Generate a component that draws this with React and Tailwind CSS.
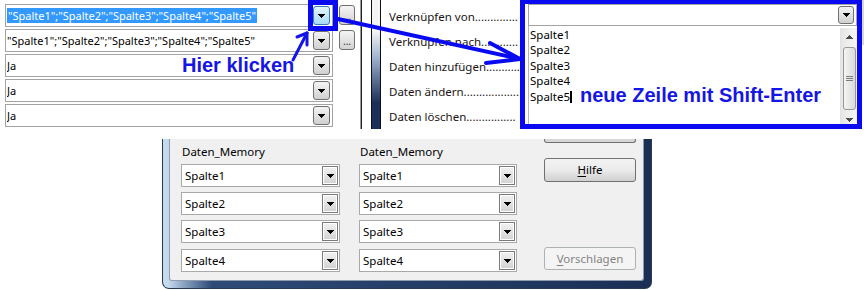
import React from "react";

const UI = "font-['Noto_Sans',sans-serif]";
const ANN = "font-['Liberation_Sans',Arial,sans-serif] font-bold text-[20px] leading-[20px] text-[#1616e4]";

function Tri({ up = false, color = "#000" }) {
  const rows = up
    ? [[3, 0, 1], [2, 1, 3], [1, 2, 5], [0, 3, 7]]
    : [[0, 0, 7], [1, 1, 5], [2, 2, 3], [3, 3, 1]];
  return (
    <svg width="7" height="4" viewBox="0 0 7 4" shapeRendering="crispEdges">
      {rows.map(([x, y, w]) => (
        <rect key={y} x={x} y={y} width={w} height="1" fill={color} />
      ))}
    </svg>
  );
}

function TopField({ children, hover, ellipsis }) {
  return (
    <div className="flex items-start gap-[6px]">
      <div className="w-[328px] h-[23px] border border-[#a3a3a3] bg-white flex items-center pl-px pr-[2px]">
        <div className="flex-1 min-w-0 whitespace-nowrap overflow-hidden text-[11px] leading-[15px] text-black">
          {children}
        </div>
        <div
          className={
            hover
              ? "w-[17px] h-[19px] rounded-[3px] border border-[#3c7fb1] bg-linear-to-b from-[#e3f4fc] to-[#a9daf6] flex items-center justify-center"
              : "w-[17px] h-[19px] rounded-[3px] border border-[#707070] bg-linear-to-b from-[#f4f4f4] to-[#d0d0d0] flex items-center justify-center"
          }
        >
          <Tri />
        </div>
      </div>
      {ellipsis && (
        <div className="mt-px w-[16px] h-[20px] rounded-[3px] border border-[#707070] bg-linear-to-b from-[#f4f4f4] to-[#d3d3d3] flex items-end justify-center pb-[3px] text-[10px] leading-[10px] text-[#333]">
          ...
        </div>
      )}
    </div>
  );
}

function DlgCombo({ text, w, className = "" }) {
  return (
    <div
      className={`h-[23px] border border-[#a9a9a9] bg-white flex items-center pl-[3px] pr-px ${className}`}
      style={{ width: w }}
    >
      <div className="flex-1 text-[11.5px] leading-[15px] text-black">{text}</div>
      <div className="w-[16px] h-[19px] border border-[#7a7a7a] shadow-[inset_0_0_0_1px_#ffffff] bg-linear-to-b from-[#f2f2f2] to-[#d2d2d2] flex items-center justify-center">
        <Tri />
      </div>
    </div>
  );
}

function DlgColumn({ w }) {
  const rows = ["Spalte1", "Spalte2", "Spalte3", "Spalte4"];
  const mts = ["", "mt-[5px]", "mt-[5px]", "mt-[6px]"];
  return (
    <div className="flex flex-col" style={{ width: w }}>
      <div className="h-[16px] leading-[16px] text-[11.5px] text-black pl-px mb-[4px]">Daten_Memory</div>
      {rows.map((r, i) => (
        <DlgCombo key={r} text={r} w={w} className={mts[i]} />
      ))}
    </div>
  );
}

export default function App() {
  const labels = [
    ["Verknüpfen von", 14],
    ["Verknüpfen nach", 12],
    ["Daten hinzufügen", 11],
    ["Daten ändern", 18],
    ["Daten löschen", 16],
  ];
  return (
    <div className={`relative w-[864px] h-[290px] bg-white overflow-hidden ${UI}`}>
      {/* top strip */}
      <div className="flex h-[129px]">
        {/* left panel */}
        <div className="w-[360px] flex flex-col gap-[2px] pt-[4px] pl-[5px]">
          <TopField hover ellipsis>
            <span className="bg-[#3399ff] text-white px-px">
              "Spalte1";"Spalte2";"Spalte3";"Spalte4";"Spalte5"
            </span>
          </TopField>
          <TopField ellipsis>"Spalte1";"Spalte2";"Spalte3";"Spalte4";"Spalte5"</TopField>
          <TopField>Ja</TopField>
          <TopField>Ja</TopField>
          <TopField>Ja</TopField>
        </div>

        {/* middle panel */}
        <div className="w-[160px] flex">
          <div className="w-px bg-[#9a9a9a]" />
          <div className="w-px bg-[#222]" />
          <div className="ml-[9px] w-[10px] border-x border-[#111] bg-linear-to-b from-[#f4f4f4] from-[24%] via-[#9fb3cf] via-[45%] to-[#1c2f57] to-[80%]" />
          <div className="ml-[8px] flex-1 min-w-0 overflow-hidden pt-[4px] flex flex-col">
            {labels.map(([l, n]) => (
              <div key={l} className="h-[25px] leading-[25px] whitespace-nowrap text-[11.5px] text-[#1b1414]">
                {l}
                {".".repeat(n)}
              </div>
            ))}
          </div>
        </div>

        {/* right annotated box */}
        <div className="w-[342px] h-[129px] border-x-[5px] border-b-[5px] border-t-4 border-[#0a0af0] bg-white flex flex-col pl-[3px]">
          <div className="h-[22px] border border-[#a3a3a3] flex items-center justify-end pr-[2px]">
            <div className="w-[16px] h-[18px] rounded-[3px] border border-[#707070] bg-linear-to-b from-[#f4f4f4] to-[#d0d0d0] flex items-center justify-center">
              <Tri />
            </div>
          </div>
          <div className="flex-1 flex border-l border-[#b5b5b5]">
            <div className="flex-1 pt-[1px] pl-px text-[11.5px] leading-[15.4px] text-black flex flex-col items-start">
              <div>Spalte1</div>
              <div>Spalte2</div>
              <div>Spalte3</div>
              <div>Spalte4</div>
              <div>
                Spalte5
                <span className="inline-block w-[2px] h-[12px] bg-black align-[-2px]" />
              </div>
            </div>
            <div className="w-[17px] mt-[2px] bg-linear-to-r from-[#e6e6e6] to-[#f6f6f6] border-l border-[#e2e2e2] flex flex-col items-center pt-[7px]">
              <Tri up color="#4a4a4a" />
              <div className="mt-[8px] w-[13px] h-[63px] rounded-[3px] border border-[#979797] bg-linear-to-r from-[#f5f5f5] to-[#d9d9d9] flex flex-col items-center justify-center gap-px">
                <div className="w-[7px] h-px bg-[#7a7a7a]" />
                <div className="w-[7px] h-px bg-[#7a7a7a]" />
                <div className="w-[7px] h-px bg-[#7a7a7a]" />
              </div>
              <div className="mt-[8px]">
                <Tri color="#4a4a4a" />
              </div>
            </div>
          </div>
        </div>
        <div className="w-[2px] h-[45px] bg-[#d8d8d8]" />
      </div>

      {/* bottom dialog */}
      <div className="ml-[162px] mt-[10px] w-[490px] h-[150px] rounded-b-[7px] border-x border-b border-[#2a3a52] bg-linear-to-r from-[#c6daee] from-[1%] via-[#2e4b78] via-[10%] to-[#1b2f55] pl-[6px] pr-[7px] pb-[7px]">
        <div className="h-full bg-[#f0f0f0] border-x border-b border-[#8f9cad] rounded-b-[3px] flex">
          <div className="flex gap-[19px] pt-[5px] pl-[11px]">
            <DlgColumn w={159} />
            <DlgColumn w={158} />
          </div>
          <div className="ml-[27px] w-[92px] flex flex-col">
            <div className="h-[4px] border-x border-b border-[#707070] rounded-b-[3px] bg-[#d6d6d6]" />
            <div className="mt-[15px] h-[24px] rounded-[3px] border border-[#707070] bg-linear-to-b from-[#f3f3f3] from-0% via-[#ebebeb] via-50% to-[#cfcfcf] flex items-center justify-center text-[11.5px] text-black">
              <span>
                <span className="underline underline-offset-2">H</span>ilfe
              </span>
            </div>
            <div className="mt-[65px] h-[23px] rounded-[3px] border border-[#adb2b5] bg-[#f4f4f4] flex items-center justify-center text-[11.5px] text-[#838383]">
              <span>
                <span className="underline underline-offset-2">V</span>orschlagen
              </span>
            </div>
          </div>
        </div>
      </div>

      {/* annotations */}
      <div className={`absolute left-[182px] top-[55px] whitespace-nowrap ${ANN}`}>Hier klicken</div>
      <div className={`absolute left-[580px] top-[85px] whitespace-nowrap ${ANN}`}>neue Zeile mit Shift-Enter</div>
      <svg className="absolute left-0 top-0 pointer-events-none" width="864" height="290" viewBox="0 0 864 290">
        <rect x="310.5" y="2.5" width="25" height="26" fill="none" stroke="#0a0af0" strokeWidth="5" />
        <g stroke="#1414e8" strokeWidth="3" strokeLinecap="round" fill="none">
          <line x1="293" y1="60" x2="307" y2="33" />
          <line x1="307" y1="33" x2="297" y2="37" />
          <line x1="307" y1="33" x2="307" y2="45" />
        </g>
        <g stroke="#0a0af0" strokeWidth="4" strokeLinecap="round" fill="none">
          <line x1="338" y1="19" x2="520" y2="59" />
          <line x1="520" y1="59" x2="490" y2="43" />
          <line x1="520" y1="59" x2="486" y2="63" />
        </g>
      </svg>
    </div>
  );
}
